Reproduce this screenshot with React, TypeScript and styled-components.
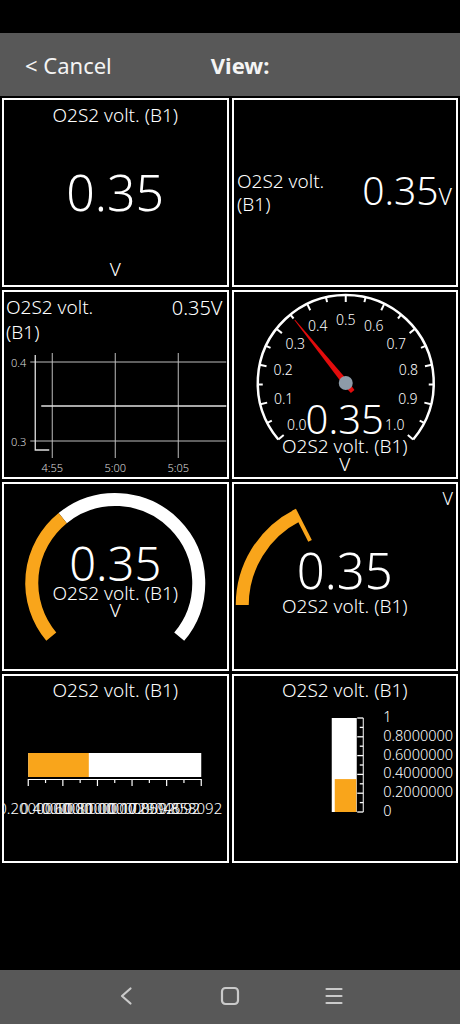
import styled, { createGlobalStyle } from "styled-components";

const GlobalStyle = createGlobalStyle`
  html, body {
    margin: 0;
    padding: 0;
    background: #000;
  }
  body {
    font-family: "Noto Sans", "DejaVu Sans", sans-serif;
    font-weight: 300;
    color: #fff;
  }
`;

const ORANGE = "#f9a51b";

const Screen = styled.div`
  width: 460px;
  height: 1024px;
  display: flex;
  flex-direction: column;
  background: #000;
  overflow: hidden;
`;

const StatusBar = styled.div`
  height: 33px;
  flex-shrink: 0;
`;

const TopBar = styled.div`
  height: 63px;
  flex-shrink: 0;
  background: #585858;
  display: flex;
  align-items: center;
  gap: 99px;
  padding-left: 25px;
  font-size: 22px;
  font-weight: 400;
  color: #f4f4f4;
`;

const CancelBtn = styled.span`
  cursor: pointer;
`;

const ViewTitle = styled.span`
  font-weight: 700;
`;

const Grid = styled.div`
  display: grid;
  grid-template-columns: 1fr 1fr;
  grid-auto-rows: 189px;
  gap: 3px;
  padding: 2px;
`;

const Tile = styled.div`
  border: 2px solid #fff;
  background: #000;
  display: grid;
  overflow: hidden;
  min-width: 0;
  & > * {
    grid-area: 1 / 1;
    min-width: 0;
  }
`;

const Spacer = styled.div`
  flex: 1;
`;

const NavBar = styled.div`
  height: 54px;
  flex-shrink: 0;
  box-sizing: border-box;
  padding-bottom: 3px;
  background: #585858;
  display: flex;
  justify-content: center;
  align-items: center;
  gap: 80px;
`;

const NavIcon = styled.svg`
  width: 24px;
  height: 24px;
  display: block;
  fill: none;
  stroke: #cacaca;
  stroke-width: 2.2;
  stroke-linecap: round;
  stroke-linejoin: round;
`;

const Drawing = styled.svg`
  width: 100%;
  height: 100%;
  display: block;
  font-weight: 300;
`;

/* digital tile */
const DigitalLayout = styled.div`
  display: flex;
  flex-direction: column;
  align-items: center;
  padding: 3px 0 3.6px;
`;

const Caption = styled.div<{ $size?: number; $lh?: number }>`
  font-size: ${(p) => p.$size ?? 19}px;
  line-height: ${(p) => p.$lh ?? 24}px;
  white-space: nowrap;
`;

const CenterValue = styled.div`
  flex: 1;
  display: flex;
  align-items: center;
  font-size: 50px;
  line-height: 50px;
`;

/* side-by-side tile */
const SideLayout = styled.div`
  display: flex;
  align-items: center;
  justify-content: space-between;
  padding: 0 4px 0 3.5px;
`;

const WrapTitle = styled.div<{ $size: number; $lh: number }>`
  font-size: ${(p) => p.$size}px;
  line-height: ${(p) => p.$lh}px;
  max-width: 110px;
`;

const SideValue = styled.div`
  font-size: 39px;
  line-height: 46px;
  white-space: nowrap;
`;

const SmallUnit = styled.span`
  font-size: 23px;
`;

/* graph tile */
const GraphHeader = styled.div`
  display: flex;
  justify-content: space-between;
  align-items: flex-start;
  padding: 3px 4px 0 2px;
`;

const GraphValue = styled.div`
  font-size: 20px;
  line-height: 25px;
`;

/* gauge readouts */
const Readout = styled.div<{ $top: number }>`
  display: flex;
  flex-direction: column;
  align-items: center;
  padding-top: ${(p) => p.$top}px;
`;

const ReadValue = styled.div<{ $size: number; $lh: number }>`
  font-size: ${(p) => p.$size}px;
  line-height: ${(p) => p.$lh}px;
`;

const ReadLabel = styled.div<{ $lh: number }>`
  font-size: 19px;
  line-height: ${(p) => p.$lh}px;
  white-space: nowrap;
`;

const CornerUnit = styled.div`
  justify-self: end;
  align-self: start;
  padding: 5.4px 3px 0 0;
  font-size: 18px;
  line-height: 18px;
`;

const BarTitle = styled.div`
  justify-self: center;
  align-self: start;
  padding-top: 1.5px;
  font-size: 19px;
  line-height: 24px;
  white-space: nowrap;
`;

const TITLE = "O2S2 volt. (B1)";
const VALUE = 0.35;

const rad = (d: number) => (d * Math.PI) / 180;
const polar = (cx: number, cy: number, r: number, deg: number) => [
  cx + r * Math.sin(rad(deg)),
  cy - r * Math.cos(rad(deg)),
];
const arcPath = (cx: number, cy: number, r: number, a0: number, a1: number) => {
  const [x0, y0] = polar(cx, cy, r, a0);
  const [x1, y1] = polar(cx, cy, r, a1);
  const large = a1 - a0 > 180 ? 1 : 0;
  return `M${x0} ${y0} A${r} ${r} 0 ${large} 1 ${x1} ${y1}`;
};

function DialGauge() {
  const cx = 111.5;
  const cy = 91;
  const a = -130 + VALUE * 260;
  const dx = Math.sin(rad(a));
  const dy = -Math.cos(rad(a));
  const px = Math.cos(rad(a));
  const py = Math.sin(rad(a));
  const pt = (r: number, w: number) => `${cx + dx * r + px * w},${cy + dy * r + py * w}`;
  const needle = [pt(81, 0.4), pt(81, -0.4), pt(0, -3), pt(-11, -2.3), pt(-11, 2.3), pt(0, 3)].join(" ");
  return (
    <Drawing viewBox="0 0 222 185">
      <path d={arcPath(cx, cy, 88, -130, 130)} stroke="#fff" strokeWidth={2.5} fill="none" />
      {Array.from({ length: 21 }, (_, i) => {
        const ang = -130 + 13 * i;
        const [x0, y0] = polar(cx, cy, i % 2 === 0 ? 81 : 83, ang);
        const [x1, y1] = polar(cx, cy, 88, ang);
        return <line key={i} x1={x0} y1={y0} x2={x1} y2={y1} stroke="#fff" strokeWidth={2} />;
      })}
      {Array.from({ length: 11 }, (_, i) => {
        const [x, y] = polar(cx, cy, 64, -130 + 26 * i);
        return (
          <text key={i} x={x} y={y} fill="#fff" fontSize={14} textAnchor="middle" dominantBaseline="central">
            {(i / 10).toFixed(1)}
          </text>
        );
      })}
      <polygon points={needle} fill="#e20c0c" />
      <circle cx={cx} cy={cy} r={7} fill="#8d9ba8" />
    </Drawing>
  );
}

function RingGauge() {
  const cx = 111;
  const cy = 99;
  const a = -130 + VALUE * 260;
  return (
    <Drawing viewBox="0 0 222 185">
      <path d={arcPath(cx, cy, 83.5, a, 130)} stroke="#fff" strokeWidth={13} fill="none" />
      <path d={arcPath(cx, cy, 83.5, -130, a)} stroke={ORANGE} strokeWidth={13} fill="none" />
    </Drawing>
  );
}

function HalfGauge() {
  const cx = 108.5;
  const cy = 121;
  const a = -90 + VALUE * 180;
  const [x0, y0] = polar(cx, cy, 72, a);
  const [x1, y1] = polar(cx, cy, 107, a);
  return (
    <Drawing viewBox="0 0 222 185">
      <path d={arcPath(cx, cy, 100.5, -90, a)} stroke={ORANGE} strokeWidth={13} fill="none" />
      <line x1={x0} y1={y0} x2={x1} y2={y1} stroke={ORANGE} strokeWidth={4} />
    </Drawing>
  );
}

function TrendChart() {
  const grid = "#bdbdbd";
  return (
    <Drawing viewBox="0 0 222 185">
      {[70, 149].map((y) => (
        <line key={y} x1={26} y1={y} x2={222} y2={y} stroke={grid} strokeWidth={1} />
      ))}
      {[48, 111, 174].map((x) => (
        <line key={x} x1={x} y1={61} x2={x} y2={166} stroke={grid} strokeWidth={1} />
      ))}
      <polyline points="31,63 31,158 45,158" fill="none" stroke="#e0e0e0" strokeWidth={1.3} />
      <line x1={37} y1={114} x2={222} y2={114} stroke="#e0e0e0" strokeWidth={1.5} />
      <text x={22} y={70} fill="#ddd" fontSize={11} textAnchor="end" dominantBaseline="central">0.4</text>
      <text x={22} y={149} fill="#ddd" fontSize={11} textAnchor="end" dominantBaseline="central">0.3</text>
      {[
        [48, "4:55"],
        [111, "5:00"],
        [174, "5:05"],
      ].map(([x, t]) => (
        <text key={t} x={x} y={175} fill="#ddd" fontSize={11} textAnchor="middle" dominantBaseline="central">
          {t}
        </text>
      ))}
    </Drawing>
  );
}

const hLabels: [number, string][] = [
  [30, "0.2000000"],
  [52, "0.4000000"],
  [74, "0.6000000"],
  [96, "0.8000000"],
  [118, "1.0000000"],
  [140, "0.1729046"],
  [160, "0.8592092"],
];

function HorizontalBar() {
  const x0 = 24;
  const w = 173;
  return (
    <Drawing viewBox="0 0 222 185">
      <rect x={x0} y={77} width={w} height={24} fill="#fff" />
      <rect x={x0} y={77} width={w * VALUE} height={24} fill={ORANGE} />
      <line x1={x0} y1={103.5} x2={x0 + w} y2={103.5} stroke="#fff" strokeWidth={1} />
      {Array.from({ length: 11 }, (_, k) => {
        const x = x0 + (w / 10) * k;
        return <line key={k} x1={x} y1={103} x2={x} y2={k % 2 === 0 ? 110 : 107} stroke="#fff" strokeWidth={1.2} />;
      })}
      {hLabels.map(([x, t]) => (
        <text key={x} x={x} y={132} fill="#fff" fontSize={15} textAnchor="middle" dominantBaseline="central">
          {t}
        </text>
      ))}
      <text x={218} y={132} fill="#fff" fontSize={15} textAnchor="end" dominantBaseline="central">
        0.858092
      </text>
    </Drawing>
  );
}

const vLabels = ["1", "0.8000000", "0.6000000", "0.4000000", "0.2000000", "0"];

function VerticalBar() {
  const top = 42;
  const h = 94;
  return (
    <Drawing viewBox="0 0 222 185">
      <rect x={97.5} y={top} width={25} height={h} fill="#fff" />
      <rect x={100.5} y={top + h * (1 - VALUE)} width={21.5} height={h * VALUE} fill={ORANGE} />
      <line x1={129} y1={top} x2={129} y2={top + h} stroke="#fff" strokeWidth={1} />
      {Array.from({ length: 11 }, (_, k) => {
        const y = top + (h / 10) * k;
        return <line key={k} x1={k % 2 === 0 ? 123 : 125.5} y1={y} x2={129} y2={y} stroke="#fff" strokeWidth={1.3} />;
      })}
      {vLabels.map((t, k) => (
        <text key={t} x={149} y={40 + 18.8 * k} fill="#fff" fontSize={14.5} dominantBaseline="central">
          {t}
        </text>
      ))}
    </Drawing>
  );
}

export default function App() {
  const value = VALUE.toFixed(2);
  return (
    <>
      <GlobalStyle />
      <Screen>
        <StatusBar />
        <TopBar>
          <CancelBtn>&lt; Cancel</CancelBtn>
          <ViewTitle>View:</ViewTitle>
        </TopBar>
        <Grid>
          <Tile>
            <DigitalLayout>
              <Caption>{TITLE}</Caption>
              <CenterValue>{value}</CenterValue>
              <Caption>V</Caption>
            </DigitalLayout>
          </Tile>
          <Tile>
            <SideLayout>
              <WrapTitle $size={19} $lh={23}>{TITLE}</WrapTitle>
              <SideValue>
                {value}
                <SmallUnit>V</SmallUnit>
              </SideValue>
            </SideLayout>
          </Tile>
          <Tile>
            <TrendChart />
            <GraphHeader>
              <WrapTitle $size={19} $lh={25}>{TITLE}</WrapTitle>
              <GraphValue>{value}V</GraphValue>
            </GraphHeader>
          </Tile>
          <Tile>
            <DialGauge />
            <Readout $top={108.4}>
              <ReadValue $size={40} $lh={37}>{value}</ReadValue>
              <ReadLabel $lh={18}>{TITLE}</ReadLabel>
              <ReadLabel $lh={18}>V</ReadLabel>
            </Readout>
          </Tile>
          <Tile>
            <RingGauge />
            <Readout $top={58.3}>
              <ReadValue $size={47} $lh={42.6}>{value}</ReadValue>
              <ReadLabel $lh={17}>{TITLE}</ReadLabel>
              <ReadLabel $lh={17}>V</ReadLabel>
            </Readout>
          </Tile>
          <Tile>
            <HalfGauge />
            <CornerUnit>V</CornerUnit>
            <Readout $top={59.7}>
              <ReadValue $size={49} $lh={53.7}>{value}</ReadValue>
              <ReadLabel $lh={18}>{TITLE}</ReadLabel>
            </Readout>
          </Tile>
          <Tile>
            <HorizontalBar />
            <BarTitle>{TITLE}</BarTitle>
          </Tile>
          <Tile>
            <VerticalBar />
            <BarTitle>{TITLE}</BarTitle>
          </Tile>
        </Grid>
        <Spacer />
        <NavBar>
          <NavIcon viewBox="0 0 24 24">
            <polyline points="16.5,4.5 8,12 16.5,19.5" />
          </NavIcon>
          <NavIcon viewBox="0 0 24 24">
            <rect x={4} y={4} width={16} height={16} rx={3.5} />
          </NavIcon>
          <NavIcon viewBox="0 0 24 24">
            <line x1={4.5} y1={5} x2={19.5} y2={5} />
            <line x1={4.5} y1={12} x2={19.5} y2={12} />
            <line x1={4.5} y1={19} x2={19.5} y2={19} />
          </NavIcon>
        </NavBar>
      </Screen>
    </>
  );
}
